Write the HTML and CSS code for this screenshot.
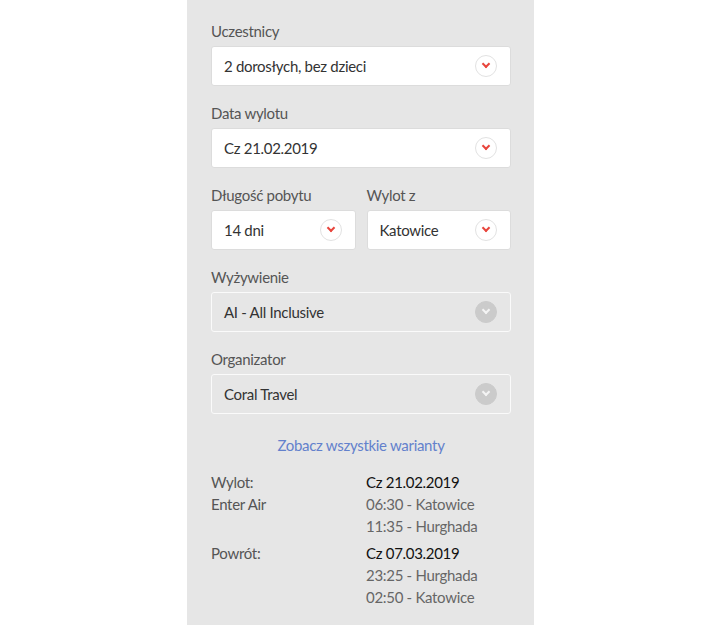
FILE: index.html
```html
<!DOCTYPE html>
<html lang="pl">
<head>
  <meta charset="UTF-8">
  <meta name="viewport" content="width=device-width, initial-scale=1.0">
  <title>Rezerwacja</title>
  <link rel="stylesheet" href="styles.css">
</head>
<body>
  <div class="panel">
    <div class="field">
      <div class="label">Uczestnicy</div>
      <div class="select">2 dorosłych, bez dzieci<span class="arrow"></span></div>
    </div>
    <div class="field">
      <div class="label">Data wylotu</div>
      <div class="select">Cz 21.02.2019<span class="arrow"></span></div>
    </div>
    <div class="row">
      <div class="field">
        <div class="label">Długość pobytu</div>
        <div class="select">14 dni<span class="arrow"></span></div>
      </div>
      <div class="field">
        <div class="label">Wylot z</div>
        <div class="select">Katowice<span class="arrow"></span></div>
      </div>
    </div>
    <div class="field">
      <div class="label">Wyżywienie</div>
      <div class="select disabled">AI - All Inclusive<span class="arrow"></span></div>
    </div>
    <div class="field">
      <div class="label">Organizator</div>
      <div class="select disabled">Coral Travel<span class="arrow"></span></div>
    </div>
    <a class="variants" href="#">Zobacz wszystkie warianty</a>
    <div class="flight">
      <div class="flight-label">Wylot:<br>Enter Air</div>
      <div class="flight-info">
        <div class="date">Cz 21.02.2019</div>
        <div>06:30 - Katowice</div>
        <div>11:35 - Hurghada</div>
      </div>
    </div>
    <div class="flight">
      <div class="flight-label">Powrót:</div>
      <div class="flight-info">
        <div class="date">Cz 07.03.2019</div>
        <div>23:25 - Hurghada</div>
        <div>02:50 - Katowice</div>
      </div>
    </div>
  </div>
</body>
</html>
```

FILE: styles.css
```css
body {
  margin: 0;
  padding: 0;
  background: #fff;
  font-family: "Source Sans Pro", Lato, "Liberation Sans", sans-serif;
  font-size: 15px;
}
.panel {
  width: 300px;
  min-height: 625px;
  margin-left: 187px;
  padding: 21px 23px 0 24px;
  box-sizing: content-box;
  background: #e6e6e6;
}
.field {
  margin-bottom: 17px;
}
.label {
  color: #555;
  line-height: 20px;
  margin-bottom: 5px;
  letter-spacing: -0.3px;
}
.select {
  position: relative;
  height: 38px;
  line-height: 38px;
  padding: 0 12px;
  background: #fff;
  border: 1px solid #dcdcdc;
  border-radius: 3px;
  color: #333;
  letter-spacing: -0.3px;
}
.arrow {
  position: absolute;
  right: 13px;
  top: 8px;
  width: 20px;
  height: 20px;
  border: 1px solid #e2e2e2;
  border-radius: 50%;
  background: #fff;
}
.arrow::after {
  content: "";
  position: absolute;
  left: 7px;
  top: 5px;
  width: 4px;
  height: 4px;
  border-right: 2px solid #e8453c;
  border-bottom: 2px solid #e8453c;
  transform: rotate(45deg);
}
.select.disabled {
  background: #e6e6e6;
  border-color: #fafafa;
}
.select.disabled .arrow {
  background: #cbcbcb;
  border-color: #cbcbcb;
}
.select.disabled .arrow::after {
  border-color: #f4f4f4;
}
.row {
  display: flex;
  gap: 11px;
}
.row .field {
  flex: 1;
}
.variants {
  display: block;
  margin-top: 20px;
  text-align: center;
  color: #6381cc;
  text-decoration: none;
  line-height: 22px;
  letter-spacing: -0.3px;
}
.flight {
  display: flex;
  margin-top: 15px;
  line-height: 22px;
  letter-spacing: -0.3px;
}
.flight + .flight {
  margin-top: 5px;
}
.flight-label {
  width: 155px;
  color: #555;
}
.flight-info {
  color: #666;
}
.flight-info .date {
  color: #111;
}
```
